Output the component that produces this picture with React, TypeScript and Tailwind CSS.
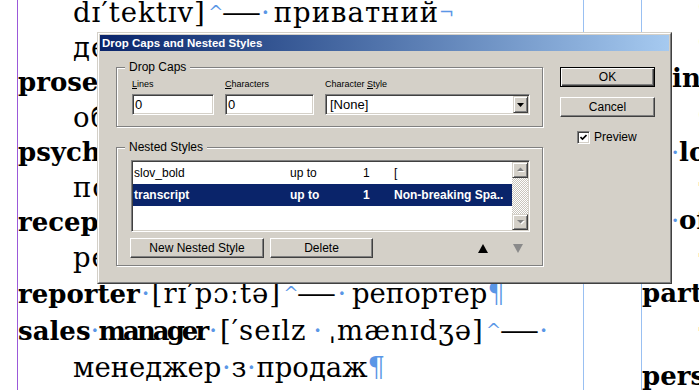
import React from "react";

function Dot({ w = "w-[10px]" }: { w?: string }) {
  return <span className={`inline-block ${w} text-center text-[#5a96e6] font-normal tracking-normal`}>·</span>;
}

function Caret() {
  return (
    <span className="inline-block w-[20px] text-center align-[3px] text-[18px] leading-[12px] text-[#5a96e6] font-normal tracking-normal">
      ^
    </span>
  );
}

function Dash() {
  return <span className="inline-block w-[31px] text-center scale-x-[1.45] tracking-normal">—</span>;
}

function Pilcrow() {
  return <span className="text-[#5a96e6] font-normal tracking-normal">¶</span>;
}

function Raised({ className = "", children }: { className?: string; children?: React.ReactNode }) {
  return (
    <div
      className={`flex items-center justify-center bg-[#d4d0c8] border border-t-white border-l-white border-r-[#404040] border-b-[#404040] shadow-[inset_-1px_-1px_0_#808080] ${className}`}
    >
      {children}
    </div>
  );
}

function ScrollBtn({ up }: { up: boolean }) {
  return (
    <div className="h-[16px] flex items-center justify-center bg-[#d4d0c8] border border-t-[#d4d0c8] border-l-[#d4d0c8] border-r-[#404040] border-b-[#404040] shadow-[inset_1px_1px_0_#fff,inset_-1px_-1px_0_#808080]">
      <svg width="9" height="6" viewBox="0 0 9 6">
        {up ? (
          <>
            <polygon points="2,5 9,5 5.5,1.5" fill="#fff" />
            <polygon points="1,4 8,4 4.5,0.5" fill="#808080" />
          </>
        ) : (
          <>
            <polygon points="2,2 9,2 5.5,5.5" fill="#fff" />
            <polygon points="1,1 8,1 4.5,4.5" fill="#808080" />
          </>
        )}
      </svg>
    </div>
  );
}

export default function App() {
  return (
    <div className="relative w-[699px] h-[390px] overflow-hidden bg-white">
      {/* Document page */}
      <div className="flex h-full font-['DejaVu_Serif',serif] text-[27.5px] text-black">
        <div className="w-[17px] shrink-0" />
        <div className="w-[566px] shrink-0 border-l border-[#9b59d9] overflow-hidden whitespace-nowrap">
          <div className="-mt-[5px]">
            <div className="h-[35px] leading-[35px] pl-[55px] tracking-[1px]">
              dɪ′tektɪv]<Caret />
              <Dash />
              <Dot w="w-[17px]" />приватний<span className="text-[#5a96e6] text-[18px] align-top tracking-normal">¬</span>
            </div>
            <div className="h-[35px] leading-[35px] pl-[55px] tracking-[1px]">детектив</div>
            <div className="h-[35px] leading-[35px] font-bold text-[26px]">prosecutor</div>
            <div className="h-[35px] leading-[35px] pl-[55px] tracking-[1px]">обвинувач</div>
            <div className="h-[35px] leading-[35px] font-bold text-[26px]">psychologist</div>
            <div className="h-[35px] leading-[35px] pl-[55px] tracking-[1px]">психолог</div>
            <div className="h-[35px] leading-[35px] font-bold text-[26px]">receptionist</div>
            <div className="h-[35px] leading-[35px] pl-[55px] tracking-[1px]">реєстратор</div>
            <div className="h-[37px] leading-[37px] tracking-[1px]">
              <b className="text-[26px] tracking-normal">reporter</b>
              <Dot w="w-[12px]" />[rɪ′pɔːtə]<Caret />
              <Dash />
              <Dot w="w-[20px]" />
              <span className="tracking-normal">репортер</span>
              <Pilcrow />
            </div>
            <div className="h-[37px] leading-[37px] tracking-[1px]">
              <b className="text-[26px] tracking-normal">sales</b>
              <Dot w="w-[8px]" />
              <b className="text-[26px] tracking-[-3px]">manager</b>
              <Dot w="w-[14px]" />[′seɪlz<Dot w="w-[22px]" />ˌmænɪdʒə]<Caret />
              <Dash />
              <Dot w="w-[18px]" />
            </div>
            <div className="h-[37px] leading-[37px] pl-[55px]">
              менеджер<Dot />з<Dot />продаж<Pilcrow />
            </div>
          </div>
        </div>
        <div className="w-[58px] shrink-0 border-l border-[#99c0f2]" />
        <div className="flex-1 border-l border-[#99c0f2] overflow-hidden whitespace-nowrap">
          <div className="-mt-[13px] leading-[35px]">
            <div className="h-[35px] pl-[56px]">слідчий</div>
            <div className="h-[39px] pl-[56px]">слідчий</div>
            <div className="h-[34px] pl-[30px] font-bold text-[26px]">instructor</div>
            <div className="h-[40px] pl-[56px]">сл</div>
            <div className="h-[35px] pl-[29px] font-bold text-[26px]">
              <Dot w="w-[8px]" />lodger
            </div>
            <div className="h-[33px] pl-[56px]">т</div>
            <div className="h-[38px] pl-[29px] font-bold text-[26px]">
              <Dot w="w-[8px]" />officer
            </div>
            <div className="h-[35px] pl-[56px]">т</div>
            <div className="h-[39px] font-bold text-[26px]">partner</div>
            <div className="h-[44px] pl-[56px]">т</div>
            <div className="h-[35px] font-bold text-[26px]">personnel</div>
          </div>
        </div>
      </div>

      {/* Dialog */}
      <div className="absolute left-[97px] top-[32px] w-[575px] h-[252px] bg-[#d4d0c8] border border-t-[#d4d0c8] border-l-[#d4d0c8] border-r-[#404040] border-b-[#404040] font-['Liberation_Sans',Arial,sans-serif] text-black">
        <div className="h-full border border-t-white border-l-white border-r-[#808080] border-b-[#808080] p-px flex flex-col">
          <div className="h-[16px] shrink-0 bg-linear-to-r from-[#0a246a] to-[#a6caf0] flex items-center pl-[2px] text-white font-bold text-[11.5px] leading-[16px]">
            Drop Caps and Nested Styles
          </div>
          <div className="flex pl-[16px]">
            {/* left */}
            <div className="pt-[9px]">
              <fieldset className="w-[427px] m-0 p-0 pb-[11px] border border-[#808080] shadow-[inset_1px_1px_0_#fff,1px_1px_0_#fff]">
                <legend className="ml-[8px] px-[4px] bg-[#d4d0c8] text-[12px] leading-[14px]">Drop Caps</legend>
                <div className="flex gap-[11px] pl-[15px] pt-[5px]">
                  <div>
                    <div className="text-[9px] leading-[11px] mb-[4px]">
                      <span className="underline">L</span>ines
                    </div>
                    <div className="w-[82px] h-[21px] bg-white border border-t-[#808080] border-l-[#808080] border-r-white border-b-white shadow-[inset_1px_1px_0_#404040,inset_-1px_-1px_0_#d4d0c8] pl-[2px] text-[13px] leading-[19px]">
                      0
                    </div>
                  </div>
                  <div>
                    <div className="text-[9px] leading-[11px] mb-[4px]">
                      <span className="underline">C</span>haracters
                    </div>
                    <div className="w-[89px] h-[21px] bg-white border border-t-[#808080] border-l-[#808080] border-r-white border-b-white shadow-[inset_1px_1px_0_#404040,inset_-1px_-1px_0_#d4d0c8] pl-[2px] text-[13px] leading-[19px]">
                      0
                    </div>
                  </div>
                  <div>
                    <div className="text-[9px] leading-[11px] mb-[4px]">
                      Character <span className="underline">S</span>tyle
                    </div>
                    <div className="w-[205px] h-[21px] flex bg-white border border-t-[#808080] border-l-[#808080] border-r-white border-b-white shadow-[inset_1px_1px_0_#404040,inset_-1px_-1px_0_#d4d0c8] p-px">
                      <div className="flex-1 pl-[3px] text-[13px] leading-[17px]">[None]</div>
                      <div className="w-[15px] h-[17px] flex items-center justify-center bg-[#d4d0c8] border border-t-[#d4d0c8] border-l-[#d4d0c8] border-r-[#404040] border-b-[#404040] shadow-[inset_1px_1px_0_#fff,inset_-1px_-1px_0_#808080]">
                        <svg width="7" height="4" viewBox="0 0 7 4">
                          <polygon points="0,0 7,0 3.5,4" fill="#000" />
                        </svg>
                      </div>
                    </div>
                  </div>
                </div>
              </fieldset>

              <fieldset className="mt-[13px] w-[427px] m-0 p-0 pb-[7px] border border-[#808080] shadow-[inset_1px_1px_0_#fff,1px_1px_0_#fff]">
                <legend className="ml-[8px] px-[4px] bg-[#d4d0c8] text-[12px] leading-[14px]">Nested Styles</legend>
                <div className="pl-[14px] pt-[6px]">
                  <div className="w-[399px] h-[72px] flex bg-white border border-t-[#808080] border-l-[#808080] border-r-white border-b-white shadow-[inset_1px_1px_0_#404040,inset_-1px_-1px_0_#d4d0c8] p-px">
                    <div className="flex-1 text-[12px] overflow-hidden">
                      <div className="h-[22px] flex items-center whitespace-nowrap">
                        <div className="w-[157px] pl-[1px]">slov_bold</div>
                        <div className="w-[73px]">up to</div>
                        <div className="w-[31px]">1</div>
                        <div>[</div>
                      </div>
                      <div className="h-[22px] flex items-center whitespace-nowrap bg-[#0a246a] text-white font-bold">
                        <div className="w-[157px] pl-[1px]">transcript</div>
                        <div className="w-[73px]">up to</div>
                        <div className="w-[31px]">1</div>
                        <div>Non-breaking Spa..</div>
                      </div>
                    </div>
                    <div className="w-[16px] flex flex-col">
                      <ScrollBtn up />
                      <div className="flex-1 bg-[conic-gradient(#c8c4bc_25%,#ffffff_0_50%,#c8c4bc_0_75%,#ffffff_0)] bg-[length:2px_2px]" />
                      <ScrollBtn up={false} />
                    </div>
                  </div>
                  <div className="mt-[6px] flex items-center -ml-px">
                    <Raised className="w-[134px] h-[20px] text-[12px]">New Nested Style</Raised>
                    <Raised className="ml-[6px] w-[103px] h-[20px] text-[12px]">Delete</Raised>
                    <svg className="ml-[105px]" width="10" height="9" viewBox="0 0 10 9">
                      <polygon points="0,9 10,9 5,0" fill="#000" />
                    </svg>
                    <svg className="ml-[25px]" width="10" height="9" viewBox="0 0 10 9">
                      <polygon points="0,0 10,0 5,9" fill="#8a8a8a" />
                    </svg>
                  </div>
                </div>
              </fieldset>
            </div>

            {/* right */}
            <div className="ml-[17px] pt-[16px] flex flex-col">
              <div className="w-[95px] h-[20px] flex items-center justify-center border border-black shadow-[inset_1px_1px_0_#fff,inset_-1px_-1px_0_#404040,inset_-2px_-2px_0_#808080] text-[12px]">
                OK
              </div>
              <Raised className="mt-[10px] w-[95px] h-[20px] text-[12px]">Cancel</Raised>
              <div className="mt-[13px] pl-[17px] flex items-center gap-[4px]">
                <div className="w-[13px] h-[13px] bg-white border border-t-[#808080] border-l-[#808080] border-r-white border-b-white shadow-[inset_1px_1px_0_#404040,inset_-1px_-1px_0_#d4d0c8] flex items-center justify-center">
                  <svg width="7" height="7" viewBox="0 0 7 7">
                    <polyline points="0.5,3 2.5,5 6.5,1" fill="none" stroke="#000" strokeWidth="1.6" />
                  </svg>
                </div>
                <span className="text-[12px] leading-[14px]">Preview</span>
              </div>
            </div>
          </div>
        </div>
      </div>
    </div>
  );
}
